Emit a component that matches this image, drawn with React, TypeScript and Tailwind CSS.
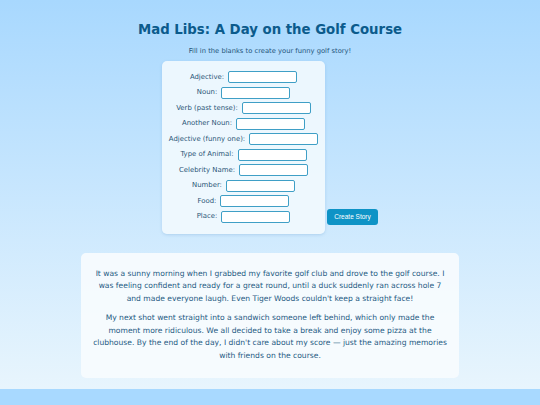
import React from "react";

const fields = [
  "Adjective:",
  "Noun:",
  "Verb (past tense):",
  "Another Noun:",
  "Adjective (funny one):",
  "Type of Animal:",
  "Celebrity Name:",
  "Number:",
  "Food:",
  "Place:",
];

export default function App() {
  return (
    <div className="min-h-screen bg-[#a8d9ff] font-['DejaVu_Sans',Verdana,sans-serif]">
      <div className="bg-gradient-to-b from-[#a8d8fe] to-[#e8f5fd] px-[81px] pt-[21px] pb-[11px]">
        <h1 className="text-center text-[13.3px] font-bold leading-[18px] text-[#0b5b8c]">
          Mad Libs: A Day on the Golf Course
        </h1>
        <p className="mt-[8px] text-center text-[6.75px] leading-[9px] text-[#24557a]">
          Fill in the blanks to create your funny golf story!
        </p>

        <div className="mt-[5px] flex items-end justify-center gap-[2px]">
          <div className="flex w-[163px] flex-col gap-[3.5px] rounded-[5px] bg-[#f2f9fe]/90 pt-[10px] pb-[11px] shadow-[0_1px_3px_rgba(80,140,190,0.25)]">
            {fields.map((f) => (
              <div key={f} className="flex items-center justify-center gap-[4px]">
                <label className="text-[6.9px] text-[#2a5576]">{f}</label>
                <input
                  type="text"
                  className="h-[12px] w-[69px] rounded-[2px] border border-[#3f9fc6] bg-white"
                />
              </div>
            ))}
          </div>
          <button className="mb-[9px] h-[16px] w-[51px] rounded-[3px] bg-[#0e93c6] font-['Liberation_Sans',Arial,sans-serif] text-[6.5px] text-white">
            Create Story
          </button>
        </div>

        <div className="mt-[19px] rounded-[5px] bg-[#f7fbfe]/95 px-[10px] pt-[15px] pb-[16px] text-center text-[7.6px] leading-[12.5px] text-[#1f5a83]">
          <p>
            It was a sunny morning when I grabbed my favorite golf club and drove to the golf course. I
            was feeling confident and ready for a great round, until a duck suddenly ran across hole 7
            and made everyone laugh. Even Tiger Woods couldn't keep a straight face!
          </p>
          <p className="mt-[7px]">
            My next shot went straight into a sandwich someone left behind, which only made the
            moment more ridiculous. We all decided to take a break and enjoy some pizza at the
            clubhouse. By the end of the day, I didn't care about my score — just the amazing memories
            with friends on the course.
          </p>
        </div>
      </div>
    </div>
  );
}
